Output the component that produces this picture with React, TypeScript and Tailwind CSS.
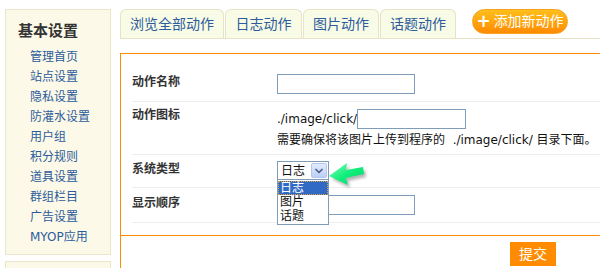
import { ChevronDown } from "lucide-react";

const menu = ["管理首页", "站点设置", "隐私设置", "防灌水设置", "用户组", "积分规则", "道具设置", "群组栏目", "广告设置", "MYOP应用"];
const tabs = [
  { label: "浏览全部动作", w: "w-[104px]" },
  { label: "日志动作", w: "w-[77px]" },
  { label: "图片动作", w: "w-[76px]" },
  { label: "话题动作", w: "w-[76px]" },
];

function GreenArrow() {
  return (
    <svg width="42" height="28" viewBox="0 0 42 28" className="absolute left-[50px] top-[-1px]">
      <defs>
        <linearGradient id="ga" x1="0" y1="0" x2="1" y2="1">
          <stop offset="0" stopColor="#7dffb8" />
          <stop offset="0.5" stopColor="#12ee7c" />
          <stop offset="1" stopColor="#00d86a" />
        </linearGradient>
        <filter id="sh" x="-20%" y="-20%" width="150%" height="150%">
          <feGaussianBlur stdDeviation="1.6" />
        </filter>
      </defs>
      <polygon points="4,18 21,5 20,12 37,9 38,16 20,20 22,27" fill="#777" opacity="0.55" filter="url(#sh)" />
      <polygon points="1,15 19,2 18,9 35,6 36,13 18,17 20,24" fill="url(#ga)" />
    </svg>
  );
}

export default function App() {
  return (
    <div className="flex w-[600px] h-[268px] overflow-hidden bg-white text-[12px] font-['DejaVu_Sans','Noto_Sans_CJK_SC',sans-serif]">
      {/* Sidebar */}
      <div className="w-[106px] ml-[5px] mt-[9px] shrink-0">
        <div className="h-[246px] border border-[#ebe6c8] bg-[#fcf9e8] pt-[11px]">
          <div className="pl-[12px] text-[15px] leading-[20px] font-bold text-[#333]">基本设置</div>
          <div className="mt-[6px] pl-[24px] flex flex-col">
            {menu.map((m) => (
              <span key={m} className="leading-[20px] text-[#2c5c9c]">{m}</span>
            ))}
          </div>
        </div>
        <div className="mt-[6px] h-[40px] border border-[#ebe6c8] bg-[#fcf9e8]" />
      </div>

      {/* Main */}
      <div className="ml-[9px] flex-1 mt-[9px] flex flex-col">
        <div className="flex items-start gap-[1px] h-[30px] border-b border-[#e8e3c4]">
          {tabs.map((t) => (
            <div
              key={t.label}
              className={`${t.w} h-[29px] flex items-center justify-center rounded-t-[6px] border border-b-0 border-[#e8e3c4] bg-[#f8fbe6] text-[14px] text-[#2c5c9c]`}
            >
              {t.label}
            </div>
          ))}
          <div className="ml-[15px] w-[96px] h-[25px] rounded-full border border-[#f6a21c] bg-gradient-to-b from-[#ffbf1a] to-[#ff8a00] flex items-center justify-center gap-[3px] text-white text-[14px]">
            <span className="text-[17px] font-bold leading-none -mt-[1px]">+</span>
            <span>添加新动作</span>
          </div>
        </div>

        <div className="mt-[14px] flex-1 border-t border-l border-[#ff8c00] flex flex-col">
          <div className="pl-[11px]">
            {/* row 1 */}
            <div className="flex h-[48px] border-b border-[#eeeeee]">
              <div className="w-[145px] pt-[20px] leading-[16px] font-bold text-[#333]">动作名称</div>
              <div className="pt-[20px]">
                <div className="w-[138px] h-[20px] border border-[#7f9db9] bg-white" />
              </div>
            </div>
            {/* row 2 */}
            <div className="flex h-[53px] border-b border-[#eeeeee]">
              <div className="w-[145px] pt-[5px] leading-[16px] font-bold text-[#333]">动作图标</div>
              <div className="pt-[7px]">
                <div className="flex items-center">
                  <span className="text-[#111]">./image/click/</span>
                  <div className="w-[109px] h-[20px] border border-[#7f9db9] bg-white" />
                </div>
                <div className="mt-[3px] leading-[16px] text-[#111] whitespace-pre">
                  需要确保将该图片上传到程序的  ./image/click/ 目录下面。
                </div>
              </div>
            </div>
            {/* row 3 */}
            <div className="flex h-[33px] border-b border-[#eeeeee]">
              <div className="w-[145px] pt-[6px] leading-[16px] font-bold text-[#333]">系统类型</div>
              <div className="pt-[6px]">
                <div className="relative z-10 w-[52px] h-[19px] border border-[#7f9db9] bg-white flex items-center">
                  <span className="pl-[3px] flex-1 text-[#111] leading-none">日志</span>
                  <div className="mr-[1px] w-[16px] h-[15px] rounded-[2px] border border-[#b3c7ee] bg-gradient-to-b from-[#e3ebfd] to-[#bccffa] flex items-center justify-center">
                    <ChevronDown size={12} strokeWidth={3.5} color="#4d6185" />
                  </div>
                  <div className="absolute left-[-1px] top-[17px] w-[52px] h-[46px] border border-[#7f9db9] bg-white pt-[1px]">
                    <div className="h-[14px] leading-[14px] pl-[2px] bg-[#316ac5] text-white outline outline-1 outline-dotted outline-[#e0a040] -outline-offset-1">日志</div>
                    <div className="h-[14px] leading-[14px] pl-[2px] text-[#111]">图片</div>
                    <div className="h-[14px] leading-[14px] pl-[2px] text-[#111]">话题</div>
                  </div>
                  <GreenArrow />
                </div>
              </div>
            </div>
            {/* row 4 */}
            <div className="flex h-[35px] border-b border-[#eeeeee]">
              <div className="w-[145px] pt-[7px] leading-[16px] font-bold text-[#333]">显示顺序</div>
              <div className="pt-[7px]">
                <div className="w-[138px] h-[20px] border border-[#7f9db9] bg-white" />
              </div>
            </div>
          </div>
          <div className="h-[12px]" />
          <div className="flex-1 border-t border-[#ff8c00] flex justify-end pr-[44px] pt-[6px]">
            <div className="w-[46px] h-[24px] bg-[#ff8c00] text-white text-[14px] flex items-center justify-center">提交</div>
          </div>
        </div>
      </div>
    </div>
  );
}
